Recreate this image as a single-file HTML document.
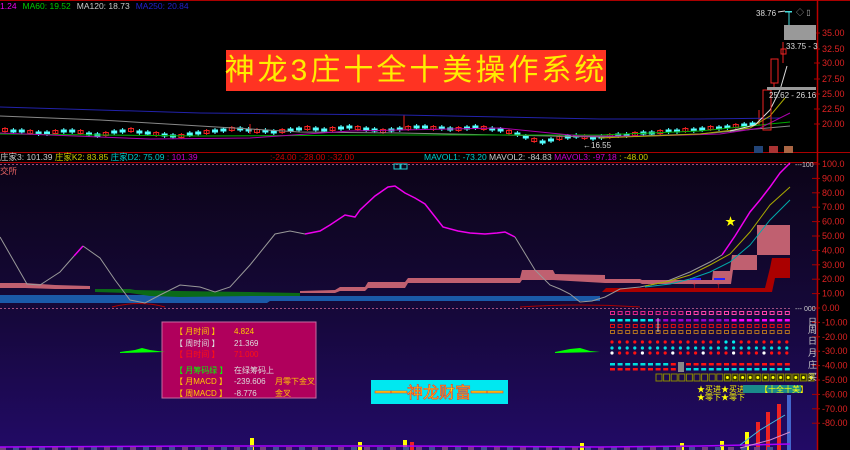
<!DOCTYPE html>
<html><head><meta charset="utf-8"><style>
html,body{margin:0;padding:0;background:#000;width:850px;height:450px;overflow:hidden}
svg{display:block}
text{font-family:"Liberation Sans","Noto Sans CJK SC",sans-serif}
</style></head><body>
<svg id="s" width="850" height="450" xmlns="http://www.w3.org/2000/svg">
<defs>
<linearGradient id="bg" x1="0" y1="0" x2="0" y2="1">
<stop offset="0" stop-color="#0c0418"/><stop offset="0.5" stop-color="#150838"/><stop offset="1" stop-color="#220a66"/>
</linearGradient>
</defs>
<rect x="0" y="0" width="850" height="152" fill="#000"/>
<rect x="0" y="163" width="817" height="287" fill="url(#bg)"/>
<rect x="817" y="152" width="33" height="298" fill="#000"/>
<line x1="0" y1="0.5" x2="850" y2="0.5" stroke="#a00" />
<line x1="0" y1="152.5" x2="850" y2="152.5" stroke="#a00"/>
<line x1="0" y1="162.5" x2="817" y2="162.5" stroke="#a00"/>
<line x1="817.5" y1="0" x2="817.5" y2="450" stroke="#b00" stroke-width="1.5"/>
<line x1="0" y1="164.5" x2="790" y2="164.5" stroke="#a05080" stroke-dasharray="2,2"/>
<line x1="0" y1="308.5" x2="790" y2="308.5" stroke="#a05080" stroke-dasharray="2,2"/>
<text x="0" y="9" font-size="8.5" fill="#e0e"><tspan>1.24</tspan><tspan fill="#0c0" dx="6">MA60: 19.52</tspan><tspan fill="#ccc" dx="6">MA120: 18.73</tspan><tspan fill="#22c" dx="6">MA250: 20.84</tspan></text>
<g font-size="9" fill="#d22">
<text x="822" y="36">35.00</text><text x="822" y="52">32.50</text><text x="822" y="66">30.00</text><text x="822" y="82">27.50</text><text x="822" y="97">25.00</text><text x="822" y="112">22.50</text><text x="822" y="127">20.00</text>
</g>
<g stroke="#a00" stroke-width="1"><line x1="814" y1="33" x2="820" y2="33"/><line x1="814" y1="49" x2="820" y2="49"/><line x1="814" y1="63" x2="820" y2="63"/><line x1="814" y1="79" x2="820" y2="79"/><line x1="814" y1="94" x2="820" y2="94"/><line x1="814" y1="109" x2="820" y2="109"/><line x1="814" y1="124" x2="820" y2="124"/></g>
<g id="topchart"></g>
<polyline fill="none" stroke="#22a" stroke-width="1" points="0,107 200,113 400,115 600,119 700,119 780,118"/>
<polyline fill="none" stroke="#888" stroke-width="1" points="0,116 100,120 200,126 300,132 400,133 500,135 600,137 700,134 790,126"/>
<polyline fill="none" stroke="#0a0" stroke-width="1" points="0,134 200,136 400,135 600,135 700,131 790,122"/>
<polyline fill="none" stroke="#a0a" stroke-width="1" points="0,133 150,139 250,138 350,131 500,128 580,136 650,136 720,134 760,128 790,113"/>
<polyline fill="none" stroke="#aa0" stroke-width="1" points="600,138 700,134 750,128 770,116 785,98"/>
<polyline fill="none" stroke="#ddd" stroke-width="1" points="730,131 755,125 770,110 780,90 787,66"/>
<rect x="763" y="90" width="8" height="40" fill="none" stroke="#e22"/>
<rect x="771" y="59" width="7" height="24" fill="none" stroke="#e22"/>
<line x1="774" y1="83" x2="774" y2="88" stroke="#e22"/>
<rect x="781" y="49" width="5" height="5" fill="none" stroke="#e22"/>
<line x1="783" y1="42" x2="783" y2="63" stroke="#e22"/>
<line x1="789" y1="11" x2="789" y2="25" stroke="#4dd"/>
<rect x="785" y="11" width="7" height="1.5" fill="#4dd"/>
<rect x="784" y="25" width="32" height="15" fill="#999"/>
<rect x="767" y="87" width="49" height="3" fill="#999"/>
<text x="756" y="16" font-size="8" fill="#ddd">38.76</text>
<line x1="778" y1="12" x2="785" y2="11" stroke="#ddd"/>
<text x="786" y="49" font-size="8" fill="#ddd">33.75 - 3</text>
<text x="769" y="98" font-size="8" fill="#ddd">25.62 - 26.16</text>
<text x="583" y="148" font-size="8" fill="#ddd">←16.55</text>
<rect x="754" y="146" width="9" height="7" fill="#247"/><rect x="769" y="146" width="9" height="7" fill="#a33"/><rect x="784" y="146" width="9" height="7" fill="#a64"/>
<text x="796" y="15" font-size="8" fill="#aaa">◇ ▯</text>
<rect x="226" y="50" width="380" height="41" fill="#ff3322"/>
<text x="416" y="80" font-size="30" fill="#ffee00" text-anchor="middle" letter-spacing="3">神龙3庄十全十美操作系统</text>
<text x="0" y="160" font-size="8.5" fill="#ccc">庄家3: 101.39 <tspan fill="#cc0">庄家K2: 83.85</tspan> <tspan fill="#0cc">庄家D2: 75.09</tspan> <tspan fill="#c0c">: 101.39</tspan></text>
<text x="270" y="160" font-size="8.5" fill="#c00">:-24.00 :-28.00 :-32.00</text>
<text x="424" y="160" font-size="8.5" fill="#0cc">MAVOL1: -73.20 <tspan fill="#ccc">MAVOL2: -84.83</tspan> <tspan fill="#c0c">MAVOL3: -97.18</tspan> <tspan fill="#cc0">: -48.00</tspan></text>
<rect x="394" y="164" width="6" height="5" fill="none" stroke="#2cc"/><rect x="401" y="164" width="6" height="5" fill="none" stroke="#2cc"/>
<text x="0" y="174" font-size="8.5" fill="#e66">交所</text>
<g font-size="9" fill="#d22" id="lax"></g>
<!-- bands -->
<polygon fill="#1a5aa8" points="0,295 267,295 272,296 600,296 600,301 270,301 267,303 0,303"/>
<polygon fill="#0b6a18" points="95,289 130,289 135,290 180,291 250,292 300,293 300,296 270,296 250,296 180,297 150,296 130,293 95,292"/>
<polygon fill="#c06070" points="0,283 25,283 55,285 90,286 90,289 55,289 25,288 0,288"/>
<polygon fill="#c06070" points="300,291 335,290 340,287 365,287 368,282 405,282 408,278 520,278 522,270 553,270 555,274 605,275 605,279 640,279 642,280 712,280 713,271 730,271 732,255 757,255 757,225 790,225 790,255 757,255 757,270 733,270 731,284 642,284 640,283 605,283 553,280 522,280 520,283 408,283 405,288 368,288 365,291 340,291 335,293 300,293"/>
<polygon fill="#aa0000" points="602,292 606,288 765,288 770,268 772,258 790,258 790,278 775,278 772,292"/>
<line x1="690" y1="279" x2="701" y2="279" stroke="#22f" stroke-width="2"/><line x1="714" y1="279" x2="725" y2="279" stroke="#22f" stroke-width="2"/>
<text x="692" y="288" font-size="9" fill="#f33">↑</text><text x="716" y="288" font-size="9" fill="#f33">↑</text>
<path d="M112,307 Q140,300 165,307" fill="none" stroke="#a00"/>
<path d="M520,307 Q580,303 640,307" fill="none" stroke="#a00"/>
<polyline fill="none" stroke="#999" stroke-width="1" points="0,237 27,284 40,285 60,272 74,256"/>
<polyline fill="none" stroke="#e0e" stroke-width="1.5" points="74,256 83,246"/>
<polyline fill="none" stroke="#999" stroke-width="1" points="83,246 100,258 115,280 130,300 145,303 160,295 180,285 200,287 215,292 230,287 250,265 275,234 290,231 305,234"/>
<polyline fill="none" stroke="#e0e" stroke-width="1.5" points="305,234 320,231 330,225 345,215 355,217 360,210 375,196 388,187 395,186 405,193 415,198 425,204 443,227 458,231 470,233 485,234 497,233 505,232 515,237"/>
<polyline fill="none" stroke="#999" stroke-width="1" points="515,237 535,270 550,285 560,289 570,294 580,302 592,301 605,297 620,289 640,287 665,282 690,272 710,262 722,255"/>
<polyline fill="none" stroke="#e0e" stroke-width="1.5" points="722,255 735,236 750,212 760,200 770,187 780,173 790,163"/>
<polyline fill="none" stroke="#aa0" stroke-width="1" points="645,286 670,281 690,275 710,265 730,254 750,232 770,205 790,187"/>
<polyline fill="none" stroke="#0aa" stroke-width="1" points="645,287 670,284 690,279 710,272 730,262 750,245 770,220 790,200"/>
<text x="725" y="225" font-size="11" fill="#ff0">★</text>
<text x="795" y="167" font-size="7" fill="#ccc">---100</text>
<text x="795" y="311" font-size="7" fill="#ccc">--- 000</text>
<g id="dots"></g>
<g font-size="9" fill="#ccc"><text x="808" y="325">日</text><text x="808" y="333">周</text><text x="808" y="344">日</text><text x="808" y="356">月</text><text x="808" y="368">庄</text><text x="808" y="380">买</text></g>
<rect x="162" y="322" width="154" height="76" fill="#b0005c" stroke="#c86aa0"/>
<g font-size="8">
<text x="175" y="334" fill="#fc0">【 月时间 】</text><text x="234" y="334" fill="#fc0">4.824</text>
<text x="175" y="346" fill="#ddd">【 周时间 】</text><text x="234" y="346" fill="#ddd">21.369</text>
<text x="175" y="357" fill="#f11">【 日时间 】</text><text x="234" y="357" fill="#f11">71.000</text>
<text x="175" y="373" fill="#0f0">【 月筹码绿 】</text><text x="234" y="373" fill="#ddd">在绿筹码上</text>
<text x="175" y="384" fill="#fc0">【 月MACD 】</text><text x="234" y="384" fill="#ddd">-239.606</text><text x="275" y="384" fill="#fc0">月零下金叉</text>
<text x="175" y="396" fill="#fc0">【 周MACD 】</text><text x="234" y="396" fill="#ddd">-8.776</text><text x="275" y="396" fill="#fc0">金叉</text>
</g>
<polygon fill="#0f0" points="120,352 135,350 142,348 150,350 165,352 120,353"/>
<polygon fill="#0f0" points="555,352 570,349 580,348 590,351 600,352 555,353"/>
<rect x="371" y="380" width="137" height="24" fill="#00e8f0"/>
<text x="439" y="398" font-size="16" fill="#ffe000" stroke="#e33" stroke-width="0.6" text-anchor="middle">━━神龙财富━━</text>
<g font-size="8" fill="#ff0"><text x="697" y="392">★买进★买进</text><text x="697" y="400">★零下★零下</text></g>
<rect x="743" y="385" width="58" height="8" fill="#1a8a8a"/>
<text x="760" y="392" font-size="8" fill="#ff0">【十全十美】</text>
<g id="vol"></g>
<polyline fill="none" stroke="#a0f" stroke-width="1.5" points="0,447 200,446 400,446 600,447 700,446 790,444"/>
<polyline fill="none" stroke="#4bd" stroke-width="1" points="740,445 760,430 785,415"/>
<polyline fill="none" stroke="#c8c" stroke-width="1" points="740,448 770,440 790,432"/>
</svg>
<script>
var ns="http://www.w3.org/2000/svg";
function el(p,t,a){var e=document.createElementNS(ns,t);for(var k in a)e.setAttribute(k,a[k]);document.getElementById(p).appendChild(e);return e;}
for(var v=100;v>=-80;v-=10){var y=164+(100-v)*1.44;var t=el("lax","text",{x:822,y:y+3});t.textContent=(v==100?"100.0":v.toFixed(2));el("lax","line",{x1:812,y1:y,x2:820,y2:y,stroke:"#a00"});}
var base=[130,131,131,132,133,133,132,131,131,132,134,135,134,132,131,130,132,133,134,135,136,136,134,133,132,131,130,129,129,130,131,131,132,131,130,129,128,129,130,129,128,127,128,129,130,131,130,129,128,127,127,128,128,129,129,128,127,128,129,130,132,134,137,140,142,140,138,137,136,137,138,137,136,135,135,134,133,133,132,131,131,130,130,129,128,128,127,126,125,124];
for(var i=0;i<base.length;i++){var x=2+i*8.4;if(x>755)break;var y=base[i];var up=(i*7)%3==0;var c=up?"#e22":"#5ff";
 el("topchart","line",{x1:x+3,y1:y-3,x2:x+3,y2:y+3,stroke:c});
 if(up)el("topchart","rect",{x:x+0.5,y:y-1.5,width:5,height:3,fill:"none",stroke:c});else el("topchart","rect",{x:x,y:y-1.5,width:6,height:3,fill:c});}
el("topchart","line",{x1:250,y1:124,x2:250,y2:134,stroke:"#e22"});
el("topchart","line",{x1:404,y1:115,x2:404,y2:130,stroke:"#e22"});
el("topchart","line",{x1:759,y1:110,x2:759,y2:125,stroke:"#e22"});
var rows=[[313,"#e2278a","sq"],[320,"#0ee","dash"],[326,"#d11","sq"],[332,"#b07020","sq"],[342,"#f11","dot"],[348,"#0dd","dot"],[353,"#f11","dot"],[364,"#0dd","dash"],[369,"#f11","dash"]];
for(var r=0;r<rows.length;r++){for(var j=0;j<24;j++){var x=610+j*7.6;var c=rows[r][1];
 if(r==0&&j>=10)c="#ff44aa"; if(r==1&&j>=6)c=(j<16?"#a000d0":"#ff00ff"); if(r==4&&(j==15||j==16))c="#0ee";
 if(r==6&&(j%4==0))c="#fff"; if(r==7&&j>=8)c="#f11"; if(r==8&&j>=10)c="#0dd";
 if(rows[r][2]=="dot")el("dots","circle",{cx:x+2,cy:rows[r][0],r:1.6,fill:c});
 else if(rows[r][2]=="dash")el("dots","rect",{x:x,y:rows[r][0]-1,width:5,height:2.5,fill:c});
 else el("dots","rect",{x:x+0.5,y:rows[r][0]-1.5,width:4,height:3,fill:"none",stroke:c,"stroke-width":1});}}
el("dots","rect",{x:678,y:362,width:6,height:10,fill:"#888"});
el("dots","line",{x1:658,y1:318,x2:658,y2:332,stroke:"#ccc"});
for(var j=0;j<21;j++){var x=656+j*7.6;el("dots","rect",{x:x,y:374,width:6,height:7,fill:j>=9?"#333300":"none",stroke:"#880"});if(j>=9)el("dots","circle",{cx:x+3,cy:377.5,r:1.5,fill:"#ff0"});}
var vb=[[250,438,"#ff0"],[358,442,"#ff0"],[403,440,"#ff0"],[410,442,"#e22"],[580,443,"#ff0"],[680,443,"#ff0"],[720,441,"#ff0"],[745,432,"#ff0"],[756,422,"#e22"],[766,412,"#e22"],[777,404,"#e22"],[787,395,"#46c"]];
vb.forEach(function(b){el("vol","rect",{x:b[0],y:b[1],width:4,height:450-b[1],fill:b[2]});});
for(var i=0;i<60;i++){el("vol","rect",{x:i*13,y:447,width:6,height:3,fill:i%2?"#405090":"#704080"});}
</script>
</body></html>
